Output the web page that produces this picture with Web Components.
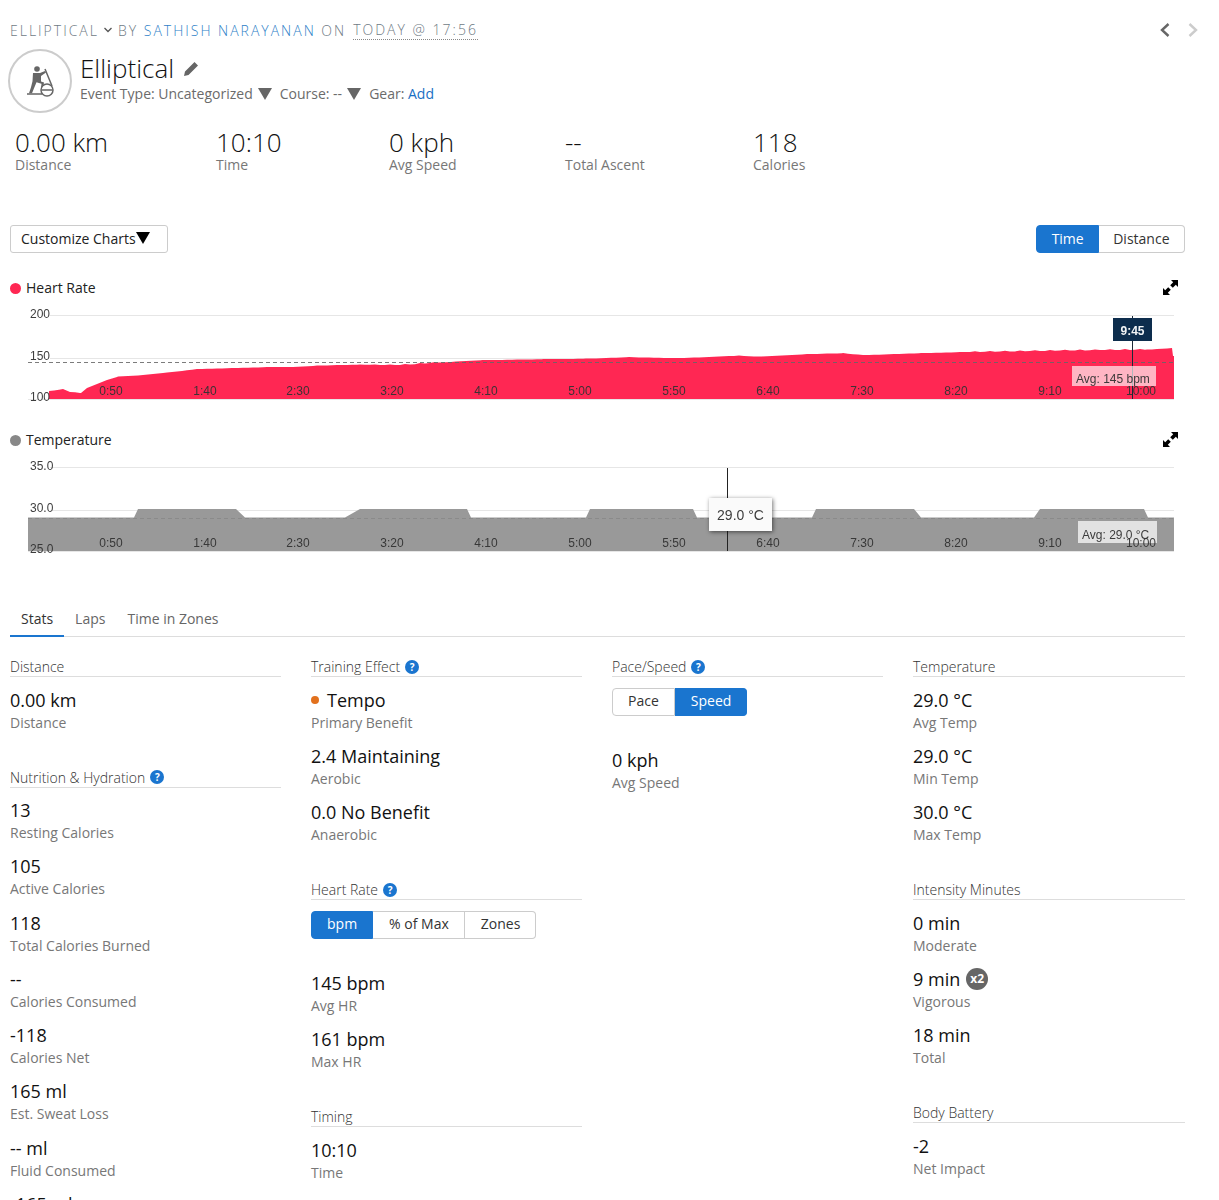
<!DOCTYPE html>
<html>
<head>
<meta charset="utf-8">
<title>Elliptical</title>
<style>
  html, body { margin: 0; background: #fff; }
  body { height: 1200px; overflow: hidden; font-family: "Open Sans", sans-serif; color: #111; }
  main { display: block; padding: 20px 34px 0 10px; }
</style>
</head>
<body>
<main>
  <activity-header></activity-header>
  <metric-row>
    <big-metric style="width:201px" value="0.00 km" label="Distance"></big-metric>
    <big-metric style="width:173px" value="10:10" label="Time"></big-metric>
    <big-metric style="width:176px" value="0 kph" label="Avg Speed"></big-metric>
    <big-metric style="width:188px" value="--" label="Total Ascent"></big-metric>
    <big-metric value="118" label="Calories"></big-metric>
  </metric-row>
  <chart-toolbar></chart-toolbar>
  <activity-chart kind="hr" name="Heart Rate"></activity-chart>
  <activity-chart kind="temp" name="Temperature"></activity-chart>
  <tab-bar></tab-bar>
  <stats-grid>
    <div>
      <stat-section name="Distance">
        <stat-item value="0.00 km" label="Distance"></stat-item>
      </stat-section>
      <stat-section name="Nutrition &amp; Hydration" info>
        <stat-item value="13" label="Resting Calories"></stat-item>
        <stat-item value="105" label="Active Calories"></stat-item>
        <stat-item value="118" label="Total Calories Burned"></stat-item>
        <stat-item value="--" label="Calories Consumed"></stat-item>
        <stat-item value="-118" label="Calories Net"></stat-item>
        <stat-item value="165 ml" label="Est. Sweat Loss"></stat-item>
        <stat-item value="-- ml" label="Fluid Consumed"></stat-item>
        <stat-item value="-165 ml" label="Net Fluid"></stat-item>
      </stat-section>
    </div>
    <div>
      <stat-section name="Training Effect" info>
        <stat-item value="Tempo" label="Primary Benefit" dot></stat-item>
        <stat-item value="2.4 Maintaining" label="Aerobic"></stat-item>
        <stat-item value="0.0 No Benefit" label="Anaerobic"></stat-item>
      </stat-section>
      <stat-section name="Heart Rate" info>
        <seg-buttons options="bpm,% of Max,Zones" active="0"></seg-buttons>
        <stat-item value="145 bpm" label="Avg HR"></stat-item>
        <stat-item value="161 bpm" label="Max HR"></stat-item>
      </stat-section>
      <stat-section name="Timing">
        <stat-item value="10:10" label="Time"></stat-item>
      </stat-section>
    </div>
    <div>
      <stat-section name="Pace/Speed" info>
        <seg-buttons options="Pace,Speed" active="1"></seg-buttons>
        <stat-item value="0 kph" label="Avg Speed"></stat-item>
      </stat-section>
    </div>
    <div>
      <stat-section name="Temperature">
        <stat-item value="29.0 °C" label="Avg Temp"></stat-item>
        <stat-item value="29.0 °C" label="Min Temp"></stat-item>
        <stat-item value="30.0 °C" label="Max Temp"></stat-item>
      </stat-section>
      <stat-section name="Intensity Minutes">
        <stat-item value="0 min" label="Moderate"></stat-item>
        <stat-item value="9 min" label="Vigorous" badge="x2"></stat-item>
        <stat-item value="18 min" label="Total"></stat-item>
      </stat-section>
      <stat-section name="Body Battery">
        <stat-item value="-2" label="Net Impact"></stat-item>
      </stat-section>
    </div>
  </stats-grid>
</main>

<script>
const caret = (color) => `<svg width="14" height="12" viewBox="0 0 14 12"><polygon points="0,0 14,0 7,12" fill="${color}"/></svg>`;

class ActivityHeader extends HTMLElement {
  constructor() {
    super();
    this.attachShadow({ mode: 'open' }).innerHTML = `
      <style>
        :host { display: block; }
        .crumb { display: flex; align-items: center; height: 20px; font-size: 14px; font-weight: 300; letter-spacing: 2px; color: #6f7b85; white-space: pre; }
        .crumb a { color: #2f7fc8; }
        .crumb .date { border-bottom: 1px dotted #888; line-height: 18px; margin-left: 7px; }
        .crumb svg { margin: 0 6px 0 5px; }
        .nav { margin-left: auto; display: flex; gap: 16px; margin-right: -14px; }
        .nav svg { margin: 0; display: block; }
        .head { display: flex; margin: 9px 0 0 -2px; gap: 8px; }
        .avatar { width: 60px; height: 60px; border: 2px solid #ccc; border-radius: 50%; display: flex; align-items: center; justify-content: center; flex: none; }
        h1 { margin: 0; font-size: 26px; font-weight: 300; line-height: 38px; color: #111; display: flex; align-items: center; gap: 10px; }
        .sub { display: flex; align-items: center; font-size: 14px; line-height: 20px; color: #6b6b6b; margin-top: -3px; }
        .sub svg { margin: 0 8px 0 5px; }
        .sub a { color: #1a6fc4; }
      </style>
      <div class="crumb"><span>ELLIPTICAL</span><svg width="8" height="6" viewBox="0 0 8 6"><path d="M.5 1l3.500 3.500L7.500 1" fill="none" stroke="#555" stroke-width="1.300"/></svg><span>BY <a>SATHISH NARAYANAN</a> ON</span><span class="date">TODAY @ 17:56</span>
        <div class="nav">
          <svg width="12" height="16" viewBox="0 0 12 16"><path d="M9.500 2L3 8l6.500 6" fill="none" stroke="#666" stroke-width="2.400"/></svg>
          <svg width="12" height="16" viewBox="0 0 12 16"><path d="M2.500 2L9 8l-6.500 6" fill="none" stroke="#ccc" stroke-width="2.400"/></svg>
        </div>
      </div>
      <div class="head">
        <div class="avatar">
          <svg width="28" height="31" viewBox="0 0 28 31">
            <circle cx="11" cy="3" r="2.800" fill="#666"/>
            <path d="M7 7h7l5-2 1 1.500-5 3.500v5.500l3 1-1 6-2-.3.5-4.500-5-1.500-2.500 6-2 5H3l2-6 1.500-6z" fill="#666"/>
            <path d="M19 3l7 17M1 28h15" fill="none" stroke="#666" stroke-width="1.500"/>
            <circle cx="21" cy="24" r="6" fill="#fff" stroke="#666" stroke-width="1.500"/>
            <path d="M15.500 24h11" stroke="#666" stroke-width="1.500"/>
          </svg>
        </div>
        <div>
          <h1>Elliptical <svg width="15" height="15" viewBox="0 0 15 15"><path d="M0 15l1-4.500L10.500 1l3.500 3.500L4.500 14z M11.500 0l3.500 3.500" fill="#666"/></svg></h1>
          <div class="sub">Event Type: Uncategorized${caret('#666')}Course: --${caret('#666')}Gear:&nbsp;<a>Add</a></div>
        </div>
      </div>`;
  }
}
customElements.define('activity-header', ActivityHeader);

class MetricRow extends HTMLElement {
  constructor() {
    super();
    this.attachShadow({ mode: 'open' }).innerHTML = `
      <style>:host { display: flex; padding: 13px 0 0 5px; }</style><slot></slot>`;
  }
}
customElements.define('metric-row', MetricRow);

class BigMetric extends HTMLElement {
  constructor() {
    super();
    this.attachShadow({ mode: 'open' }).innerHTML = `
      <style>
        :host { display: block; flex: none; }
        .v { font-size: 26px; font-weight: 300; line-height: 32px; color: #111; }
        .l { font-size: 14px; line-height: 18px; color: #777; margin-top: -2px; }
      </style>
      <div class="v">${this.getAttribute('value')}</div>
      <div class="l">${this.getAttribute('label')}</div>`;
  }
}
customElements.define('big-metric', BigMetric);

class SegButtons extends HTMLElement {
  constructor() {
    super();
    const active = Number(this.getAttribute('active'));
    const options = this.getAttribute('options').split(',');
    this.attachShadow({ mode: 'open' }).innerHTML = `
      <style>
        :host { display: flex; width: max-content; height: 28px; margin: 2px 0 32.250px; font-size: 14px; color: #333; }
        span { display: flex; align-items: center; box-sizing: border-box; height: 28px; padding: 0 var(--pad, 15px) 2px; border: 1px solid #ccc; background: #fff; }
        span + span { border-left: 0; padding-left: var(--next-left, 16px); }
        span:first-of-type { border-radius: 4px 0 0 4px; }
        span:last-of-type { border-radius: 0 4px 4px 0; }
        .on { background: #1a75cf; border-color: #1a75cf; color: #fff; }
      </style>
      ${options.map((o, i) => `<span class="${i === active ? 'on' : ''}">${o}</span>`).join('')}`;
  }
}
customElements.define('seg-buttons', SegButtons);

class ChartToolbar extends HTMLElement {
  constructor() {
    super();
    this.attachShadow({ mode: 'open' }).innerHTML = `
      <style>
        :host { display: flex; justify-content: space-between; margin-top: 51px; }
        .btn { width: 158px; height: 28px; box-sizing: border-box; border: 1px solid #ccc; border-radius: 3px; display: flex; align-items: center; padding: 0 0 2px 10px; font-size: 14px; color: #222; }
        seg-buttons { margin: 0; --pad: 14.500px; --next-left: 14px; }
      </style>
      <div class="btn">Customize Charts${caret('#000')}</div>
      <seg-buttons options="Time,Distance" active="0"></seg-buttons>`;
  }
}
customElements.define('chart-toolbar', ChartToolbar);

const TICKS = [[111, '0:50'], [205, '1:40'], [298, '2:30'], [392, '3:20'], [486, '4:10'], [580, '5:00'], [674, '5:50'], [768, '6:40'], [862, '7:30'], [956, '8:20'], [1050, '9:10'], [1141, '10:00']];

const HR_POINTS = [[49, 391], [63, 389], [70, 392], [81, 393], [87, 388], [107, 380], [118, 376.500], [143, 375], [167, 372.500], [197, 369], [233, 368], [267, 367], [293, 367], [317, 365.500], [360, 364.500], [400, 365], [436, 362.500], [482, 360], [543, 359], [586, 358.500], [629, 357], [679, 358], [739, 355.500], [757, 356.500], [807, 354], [843, 353], [864, 355], [921, 353], [960, 352], [1060, 350.500], [1100, 350], [1147, 349.500], [1172, 348], [1173, 356]];

const TEMP_PLATEAUS = [[134, 138, 236, 245], [345, 360, 467, 471], [586, 590, 693, 697], [812, 816, 914, 921], [1034, 1040, 1144, 1148]];

function hrPath() {
  // a little jitter so the edge looks like sampled data
  let d = 'M49 399';
  HR_POINTS.forEach(([x, y], i) => {
    d += `L${x} ${y}`;
    const next = HR_POINTS[i + 1];
    if (next && next[0] - x > 8) {
      for (let px = x + 5; px < next[0]; px += 5) {
        const t = (px - x) / (next[0] - x);
        const wob = (px % 15 === 0 ? -0.6 : 0.2) * (px > 400 ? 1 : 0.5);
        d += `L${px} ${(y + (next[1] - y) * t + wob).toFixed(1)}`;
      }
    }
  });
  return d + 'L1174 356L1174 399Z';
}

function tempPath() {
  let d = 'M28 551L28 517.500';
  TEMP_PLATEAUS.forEach(([a, b, c, e]) => {
    d += `L${a} 517.500L${b} 509L${c} 509L${e} 517.500`;
  });
  return d + 'L1174 517.500L1174 551Z';
}

function ticks(y) {
  return TICKS.map(([x, t]) => `<text x="${x}" y="${y}" text-anchor="middle">${t}</text>`).join('');
}

const CHARTS = {
  hr: {
    color: '#ff2753',
    box: '10 300 1175 105',
    height: 105,
    svg: () => `
      <line x1="50" x2="1174" y1="315.500" y2="315.500" class="grid"/>
      <line x1="50" x2="1174" y1="358.500" y2="358.500" class="grid"/>
      <line x1="28" x2="1174" y1="399.500" y2="399.500" class="grid"/>
      <path d="${hrPath()}" fill="#ff2753"/>
      <line x1="28" x2="1174" y1="362.500" y2="362.500" stroke="#666" stroke-dasharray="4 3" opacity=".85"/>
      <text x="30" y="318">200</text><text x="30" y="360">150</text><text x="30" y="401">100</text>
      <line x1="1132.500" x2="1132.500" y1="316" y2="399" stroke="#1c2a38"/>
      <rect x="1072" y="366" width="84" height="20" fill="#fff" opacity=".66"/>
      <text x="1076" y="383">Avg: 145 bpm</text>
      ${ticks(395)}
      <rect x="1113" y="318" width="39" height="23" fill="#0d2d4d"/>
      <text x="1132.500" y="335" text-anchor="middle" class="tip">9:45</text>`,
  },
  temp: {
    color: '#888',
    box: '10 452 1175 105',
    height: 105,
    svg: () => `
      <line x1="50" x2="1174" y1="467.500" y2="467.500" class="grid"/>
      <line x1="50" x2="1174" y1="510.500" y2="510.500" class="grid"/>
      <line x1="28" x2="1174" y1="551.500" y2="551.500" class="grid"/>
      <path d="${tempPath()}" fill="#999"/>
      <line x1="28" x2="1174" y1="518.500" y2="518.500" stroke="#8a8a8a" stroke-dasharray="4 3"/>
      <text x="30" y="470">35.0</text><text x="30" y="512">30.0</text><text x="30" y="553">25.0</text>
      <rect x="1078" y="521" width="79" height="22" fill="#e2e2e2"/>
      <text x="1082" y="539">Avg: 29.0 °C</text>
      ${ticks(547)}
      <line x1="727.500" x2="727.500" y1="468" y2="551" stroke="#222"/>
      <rect x="709" y="498" width="63" height="33" fill="#fafafa" class="shadow"/>
      <text x="740.500" y="520" text-anchor="middle" class="val">29.0 °C</text>`,
  },
};

class ActivityChart extends HTMLElement {
  constructor() {
    super();
    const cfg = CHARTS[this.getAttribute('kind')];
    this.attachShadow({ mode: 'open' }).innerHTML = `
      <style>
        :host { display: block; margin-top: 25px; }
        .legend { display: flex; align-items: center; height: 18px; padding-bottom: 2px; font-size: 14px; color: #222; gap: 5px; }
        .dot { width: 11px; height: 11px; border-radius: 50%; background: ${cfg.color}; margin-top: 2px; }
        .expand { margin-left: auto; margin-right: 7.500px; }
        svg.plot { display: block; margin-top: 2px; }
        text { font: 12px "Liberation Sans", Arial, sans-serif; fill: #333; opacity: .95; }
        .grid { stroke: #e6e6e6; stroke-width: 1; }
        .tip { fill: #fff; font-weight: 700; }
        .val { font-size: 14px; }
        .shadow { filter: drop-shadow(1px 1px 2px rgba(0,0,0,.55)); }
      </style>
      <div class="legend"><span class="dot"></span><span>${this.getAttribute('name')}</span>
        <svg class="expand" width="15" height="15" viewBox="0 0 15 15"><path d="M8 0h7v7l-2.200-2.200-3 3-2.600-2.600 3-3zM0 15V8l2.200 2.200 3-3 2.600 2.600-3 3L7 15z" fill="#000"/></svg>
      </div>
      <svg class="plot" width="1175" height="${cfg.height}" viewBox="${cfg.box}">${cfg.svg()}</svg>`;
  }
}
customElements.define('activity-chart', ActivityChart);

class TabBar extends HTMLElement {
  constructor() {
    super();
    this.attachShadow({ mode: 'open' }).innerHTML = `
      <style>
        :host { display: flex; margin-top: 43px; height: 37px; box-sizing: border-box; border-bottom: 1px solid #ddd; font-size: 14px; color: #666; }
        span { display: flex; align-items: center; height: 37px; box-sizing: border-box; padding: 2px 11px 0; border-bottom: 2px solid transparent; }
        .on { color: #333; border-bottom-color: #1a75cf; }
      </style>
      <span class="on">Stats</span><span>Laps</span><span>Time in Zones</span>`;
  }
}
customElements.define('tab-bar', TabBar);

class StatsGrid extends HTMLElement {
  constructor() {
    super();
    this.attachShadow({ mode: 'open' }).innerHTML = `
      <style>:host { display: grid; grid-template-columns: 271px 271px 271px 272px; column-gap: 30px; padding-top: 20px; }</style><slot></slot>`;
  }
}
customElements.define('stats-grid', StatsGrid);

class StatSection extends HTMLElement {
  constructor() {
    super();
    const info = this.hasAttribute('info') ? '<span class="info">?</span>' : '';
    this.attachShadow({ mode: 'open' }).innerHTML = `
      <style>
        :host { display: block; margin-bottom: 35px; }
        .h { display: flex; align-items: center; gap: 5px; height: 20px; margin-bottom: 10.500px; box-sizing: border-box; border-bottom: 1px solid #ddd; font-size: 14px; font-weight: 300; color: #333; }
        .info { width: 14px; height: 14px; border-radius: 50%; background: #1a75cf; color: #fff; font-size: 10px; font-weight: 700; display: flex; align-items: center; justify-content: center; }
      </style>
      <div class="h">${this.getAttribute('name')}${info}</div>
      <slot></slot>`;
  }
}
customElements.define('stat-section', StatSection);

class StatItem extends HTMLElement {
  constructor() {
    super();
    const dot = this.hasAttribute('dot') ? '<span class="dot"></span>' : '';
    const badge = this.getAttribute('badge');
    this.attachShadow({ mode: 'open' }).innerHTML = `
      <style>
        :host { display: block; margin-bottom: 11.250px; }
        .v { display: flex; align-items: center; font-size: 18px; line-height: 24px; color: #111; white-space: pre; }
        .l { font-size: 14px; line-height: 20px; color: #777; margin-top: 1px; }
        .dot { width: 8px; height: 8px; border-radius: 50%; background: #e2711d; margin-right: 8px; }
        .badge { width: 22px; height: 22px; border-radius: 50%; background: #666; color: #fff; font-size: 12px; font-weight: 700; margin-left: 6px; display: flex; align-items: center; justify-content: center; }
      </style>
      <div class="v">${dot}${this.getAttribute('value')}${badge ? `<span class="badge">${badge}</span>` : ''}</div>
      <div class="l">${this.getAttribute('label')}</div>`;
  }
}
customElements.define('stat-item', StatItem);
</script>
</body>
</html>
